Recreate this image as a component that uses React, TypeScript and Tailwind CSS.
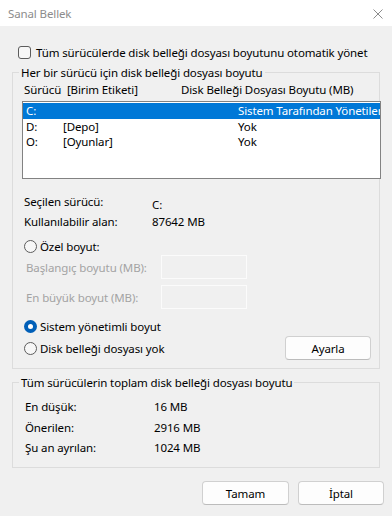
import React from "react";

const Radio = ({checked}: {checked?: boolean}) => (
    checked ? (
        <span className="flex h-[13px] w-[13px] shrink-0 items-center justify-center rounded-full bg-[#005fb8]">
            <span className="h-[5px] w-[5px] rounded-full bg-white"/>
        </span>
    ) : (
        <span className="h-[13px] w-[13px] shrink-0 rounded-full border border-[#5c5c5c] bg-[#f7f7f7]"/>
    )
);

const Button = ({label, className}: {label: string; className?: string}) => (
    <button type="button"
            className={"h-[24px] rounded-[4px] border border-[#d0d0d0] border-b-[#bcbcbc] bg-[#fdfdfd] text-black " + (className ?? "")}>
        {label}
    </button>
);

const rows = [
    {drive: "C:", label: "", size: "Sistem Tarafından Yönetilen", selected: true},
    {drive: "D:", label: "[Depo]", size: "Yok"},
    {drive: "O:", label: "[Oyunlar]", size: "Yok"},
];

export default function App() {
    return (
        <div className="flex h-[516px] w-[392px] flex-col overflow-hidden bg-[#f0f0f0] text-[11.5px] leading-[15px] tracking-[-0.12px] text-black"
             style={{fontFamily: '"Noto Sans", "Open Sans", sans-serif'}}>
            <div className="flex h-[26px] shrink-0 items-center justify-between bg-white pl-[8px] pr-[9px]">
                <span className="text-[#8c8c8c]">Sanal Bellek</span>
                <svg width="10" height="10" viewBox="0 0 10 10" className="mt-[1px]">
                    <path d="M0.5 0.5 L9.5 9.5 M9.5 0.5 L0.5 9.5" stroke="#8c8c8c" strokeWidth="1"/>
                </svg>
            </div>

            <div className="mt-[19px] flex h-[14px] items-center pl-[18px]">
                <span className="h-[13px] w-[13px] rounded-[3px] border border-[#5c5c5c] bg-[#f7f7f7]"/>
                <span className="ml-[5px]">Tüm sürücülerde disk belleği dosyası boyutunu otomatik yönet</span>
            </div>

            <div className="relative mt-[13px] ml-[12px] h-[297px] w-[368px] border border-[#dcdcdc]">
                <span className="absolute -top-[8px] left-[6px] bg-[#f0f0f0] px-[2px]">
                    Her bir sürücü için disk belleği dosyası boyutu
                </span>
                <div className="flex h-[15px] mt-[9px] pl-[11px]">
                    <span className="w-[157px]">Sürücü&nbsp; [Birim Etiketi]</span>
                    <span>Disk Belleği Dosyası Boyutu (MB)</span>
                </div>
                <div className="mt-[4px] ml-[9px] h-[78px] w-[359px] overflow-hidden border border-[#828282] bg-white pt-[1px]">
                    {rows.map(r => (
                        <div key={r.drive}
                             className={"flex h-[15.5px] items-center whitespace-nowrap pl-[3px] " + (r.selected ? "bg-[#0078d7] text-white" : "")}>
                            <span className="w-[37px] shrink-0">{r.drive}</span>
                            <span className="w-[175px] shrink-0">{r.label}</span>
                            <span>{r.size}</span>
                        </div>
                    ))}
                </div>

                <div className="mt-[15px] flex h-[20px] pl-[11px]">
                    <span className="w-[128px]">Seçilen sürücü:</span>
                    <span className="pt-[4px] leading-[14px]">C:</span>
                </div>
                <div className="flex h-[15px] pl-[11px]">
                    <span className="w-[128px]">Kullanılabilir alan:</span>
                    <span>87642 MB</span>
                </div>

                <div className="mt-[10px] flex h-[15px] items-center pl-[11px]">
                    <Radio/>
                    <span className="ml-[3px]">Özel boyut:</span>
                </div>
                <div className="mt-[1px] flex h-[24px] items-center pl-[13px] text-[#a3a3a3]">
                    <span className="w-[135px]">Başlangıç boyutu (MB):</span>
                    <span className="h-[24px] w-[86px] border border-[#fbfbfb]"/>
                </div>
                <div className="mt-[6px] flex h-[24px] items-center pl-[13px] text-[#a3a3a3]">
                    <span className="w-[135px]">En büyük boyut (MB):</span>
                    <span className="h-[24px] w-[86px] border border-[#fbfbfb]"/>
                </div>

                <div className="mt-[10px] flex h-[15px] items-center pl-[11px]">
                    <Radio checked/>
                    <span className="ml-[3px]">Sistem yönetimli boyut</span>
                </div>
                <div className="mt-[2px] flex h-[24px] items-center pl-[11px]">
                    <Radio/>
                    <span className="ml-[3px]">Disk belleği dosyası yok</span>
                    <Button label="Ayarla" className="ml-auto mr-[8px] w-[86px]"/>
                </div>
            </div>

            <div className="relative mt-[13px] ml-[12px] h-[86px] w-[368px] border border-[#dcdcdc]">
                <span className="absolute -top-[8px] left-[6px] bg-[#f0f0f0] px-[2px]">
                    Tüm sürücülerin toplam disk belleği dosyası boyutu
                </span>
                <div className="mt-[16px] flex flex-col gap-[5.5px] pl-[12px]">
                    <div className="flex h-[15px]">
                        <span className="w-[129px]">En düşük:</span>
                        <span>16 MB</span>
                    </div>
                    <div className="flex h-[15px]">
                        <span className="w-[129px]">Önerilen:</span>
                        <span>2916 MB</span>
                    </div>
                    <div className="flex h-[15px]">
                        <span className="w-[129px]">Şu an ayrılan:</span>
                        <span>1024 MB</span>
                    </div>
                </div>
            </div>

            <div className="mt-[13px] flex justify-end gap-[9px] pr-[8px]">
                <Button label="Tamam" className="w-[87px]"/>
                <Button label="İptal" className="w-[86px]"/>
            </div>
        </div>
    );
}
